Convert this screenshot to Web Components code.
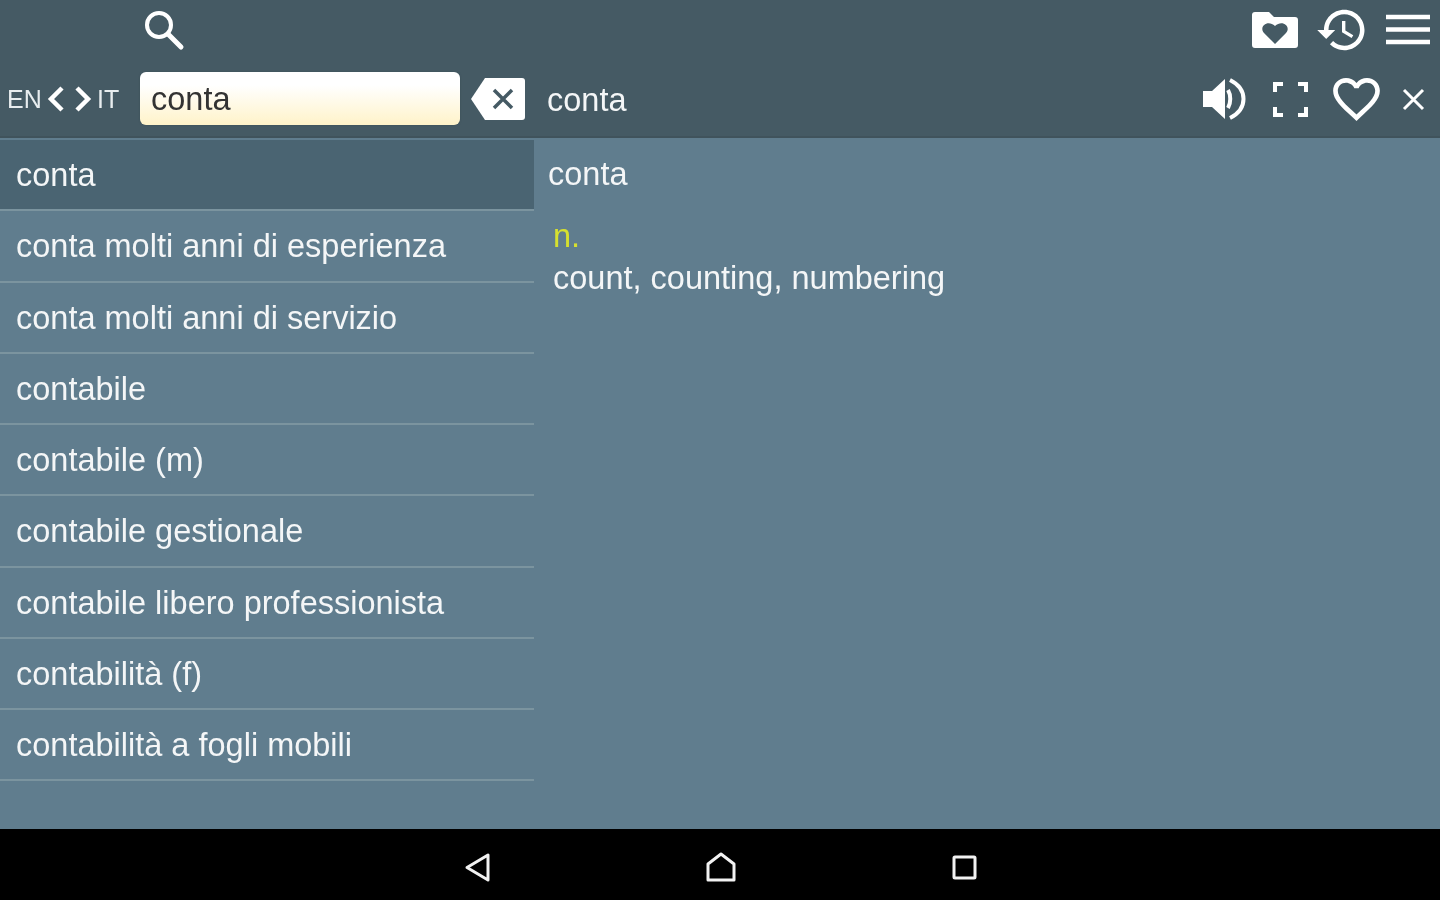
<!DOCTYPE html>
<html>
<head>
<meta charset="utf-8">
<title>EN-IT dictionary</title>
<style>
html, body { margin: 0; height: 100%; }
body { width: 1440px; height: 900px; overflow: hidden; background: #000; font-family: "Liberation Sans", Arial, sans-serif; }
</style>
</head>
<body>
<dict-app>
    <dict-toolbar slot="toolbar" query="conta" title-text="conta"></dict-toolbar>
    <word-list slot="list">
        <word-row selected>conta</word-row>
        <word-row>conta molti anni di esperienza</word-row>
        <word-row>conta molti anni di servizio</word-row>
        <word-row>contabile</word-row>
        <word-row>contabile (m)</word-row>
        <word-row>contabile gestionale</word-row>
        <word-row>contabile libero professionista</word-row>
        <word-row>contabilità (f)</word-row>
        <word-row>contabilità a fogli mobili</word-row>
    </word-list>
    <word-detail slot="detail" word="conta" kind="n.">count, counting, numbering</word-detail>
    <nav-bar slot="nav"></nav-bar>
</dict-app>

<script>
// Icon shapes, all on the same white fill or stroke
const ICONS = {
    search: '<circle cx="16" cy="16" r="12" fill="none" stroke="currentColor" stroke-width="4"/><path d="M25 25l13 13" fill="none" stroke="currentColor" stroke-width="5" stroke-linecap="round"/>',
    folder: '<path fill="currentColor" fill-rule="evenodd" d="M3 0h14l5 5h21a3 3 0 0 1 3 3v25a3 3 0 0 1-3 3H3a3 3 0 0 1-3-3V3a3 3 0 0 1 3-3zM23 32L12 21c-5.500-6 3.500-14 11-7 7.500-7 16.500 1 11 7z"/>',
    history: '<path fill="currentColor" d="M13 3c-4.970 0-9 4.030-9 9H1l3.890 3.890.07.14L9 12H6c0-3.870 3.130-7 7-7s7 3.130 7 7-3.130 7-7 7c-1.930 0-3.680-.79-4.940-2.060l-1.420 1.420C8.270 19.990 10.510 21 13 21c4.970 0 9-4.030 9-9s-4.030-9-9-9zm-1 5v5l4.280 2.540.72-1.210-3.500-2.080V8H12z"/>',
    menu: '<path d="M0 5h44M0 17.500h44M0 30h44" stroke="currentColor" stroke-width="4.500" fill="none"/>',
    prev: '<path d="M14 2L3 13l11 11" fill="none" stroke="currentColor" stroke-width="4.500"/>',
    next: '<path d="M2 2l11 11L2 24" fill="none" stroke="currentColor" stroke-width="4.500"/>',
    clear: '<path fill="currentColor" fill-rule="evenodd" d="M14 0h37a3 3 0 0 1 3 3v36a3 3 0 0 1-3 3H14L0 21z"/><path d="M23 12l18 18M41 12L23 30" stroke="#455a64" stroke-width="3.500" fill="none"/>',
    speaker: '<path fill="currentColor" d="M0 13h9L22 1v40L9 29H0z"/><path d="M25 12c3 5 3 13 0 18" fill="none" stroke="currentColor" stroke-width="4"/><path d="M27 2c18 9 18 29 0 38" fill="none" stroke="currentColor" stroke-width="4"/>',
    full: '<path d="M2 10V2h8M25 2h8v8M33 25v8h-8M10 33H2v-8" fill="none" stroke="currentColor" stroke-width="4"/>',
    heart: '<path fill="currentColor" d="M16.500 3c-1.740 0-3.410.81-4.500 2.090C10.910 3.810 9.240 3 7.500 3 4.420 3 2 5.420 2 8.500c0 3.780 3.400 6.860 8.550 11.540L12 21.350l1.450-1.320C18.600 15.360 22 12.280 22 8.500 22 5.420 19.580 3 16.500 3zm-4.400 15.550l-.1.1-.1-.1C7.140 14.240 4 11.390 4 8.500 4 6.500 5.500 5 7.500 5c1.540 0 3.040.99 3.570 2.360h1.870C13.460 5.990 14.960 5 16.500 5c2 0 3.500 1.500 3.500 3.500 0 2.890-3.140 5.740-7.900 10.050z"/>',
    close: '<path d="M2 2l19 19M21 2L2 21" stroke="currentColor" stroke-width="3" fill="none"/>',
    back: '<path d="M23 2v25L2 14.500z" fill="none" stroke="currentColor" stroke-width="3" stroke-linejoin="round"/>',
    home: '<path d="M2 28V12L15 2l13 10v16z" fill="none" stroke="currentColor" stroke-width="3" stroke-linejoin="round"/>',
    square: '<rect x="2" y="2" width="21" height="21" rx="1" fill="none" stroke="currentColor" stroke-width="3"/>'
}

class UiIcon extends HTMLElement {
    constructor(){
        super()
        this.attachShadow({mode: 'open'})
    }

    connectedCallback(){
        const view = this.getAttribute('view') || '0 0 24 24'
        const [, , w, h] = view.split(' ')
        const width = this.getAttribute('w') || w
        const height = this.getAttribute('h') || h
        this.shadowRoot.innerHTML = `
        <style>
        :host{ display:block; line-height:0; color:inherit; flex:none; }
        svg{ display:block; overflow:visible; }
        </style>
        <svg width="${width}" height="${height}" viewBox="${view}">${ICONS[this.getAttribute('name')]}</svg>`
    }
}

class DictApp extends HTMLElement {
    constructor(){
        super()
        this.attachShadow({mode: 'open'})
        this.shadowRoot.innerHTML = `
        <style>
        :host{
            display:grid;
            grid-template-columns:534px 1fr;
            grid-template-rows:138px 691px 71px;
            width:1440px;
            height:900px;
            background:#607d8e;
            color:#f4f6f7;
            font:32.5px "Liberation Sans", Arial, sans-serif;
            filter:blur(.7px);
        }
        .wide{ grid-column:1 / 3; }
        </style>
        <div class="wide"><slot name="toolbar"></slot></div>
        <slot name="list"></slot>
        <slot name="detail"></slot>
        <div class="wide"><slot name="nav"></slot></div>`
    }
}

class DictToolbar extends HTMLElement {
    constructor(){
        super()
        this.attachShadow({mode: 'open'})
        this.shadowRoot.innerHTML = `
        <style>
        :host{ display:block; height:138px; background:#455a64; color:#fff; box-shadow:inset 0 -2px 0 #40535c; }
        .top{ display:flex; align-items:center; height:58px; padding:0 10px 2px 143px; }
        .top .end{ margin-left:auto; display:flex; align-items:center; }
        .bottom{ display:flex; align-items:center; height:78px; }
        .lang{ font-size:25px; width:34px; color:#e8edef; }
        .lang.first{ margin-left:7px; }
        .lang.second{ width:22px; }
        input{
            box-sizing:border-box;
            width:320px;
            height:53px;
            margin:-1px 0 0 21px;
            padding:2px 10px 0 11px;
            border:0;
            border-radius:6px;
            background:linear-gradient(#fff 25%, #fff3c9);
            color:#333;
            font:32.5px "Liberation Sans", Arial, sans-serif;
            outline:none;
            box-shadow:0 0 2px #3a4c55;
        }
        .title{ margin:2px 0 0 22px; font-size:32.5px; color:#f4f6f7; }
        .end2{ margin-left:auto; display:flex; align-items:center; padding-right:15px; }
        </style>
        <div class="top">
            <ui-icon name="search" view="0 0 40 40"></ui-icon>
            <div class="end">
                <ui-icon name="folder" view="0 0 46 36" style="margin:2px 17px 0 0"></ui-icon>
                <ui-icon name="history" view="0 0 24 24" w="54" h="54" style="margin:2px 17px 0 0"></ui-icon>
                <ui-icon name="menu" view="0 0 44 34"></ui-icon>
            </div>
        </div>
        <div class="bottom">
            <span class="lang first">EN</span>
            <ui-icon name="prev" view="0 0 16 26" style="margin-left:7px"></ui-icon>
            <ui-icon name="next" view="0 0 16 26" style="margin:0 6px 0 11px"></ui-icon>
            <span class="lang second">IT</span>
            <input type="text">
            <ui-icon name="clear" view="0 0 54 42" style="margin-left:11px;margin-top:-1px"></ui-icon>
            <span class="title"></span>
            <div class="end2">
                <ui-icon name="speaker" view="0 0 44 42" style="margin-right:26px"></ui-icon>
                <ui-icon name="full" view="0 0 35 35" style="margin-right:25px"></ui-icon>
                <ui-icon name="heart" view="2 3 20 18.400" w="47" h="43" style="margin-right:22px"></ui-icon>
                <ui-icon name="close" view="0 0 23 23"></ui-icon>
            </div>
        </div>`
    }

    connectedCallback(){
        this.shadowRoot.querySelector('input').value = this.getAttribute('query')
        this.shadowRoot.querySelector('.title').textContent = this.getAttribute('title-text')
    }
}

class WordList extends HTMLElement {
    constructor(){
        super()
        this.attachShadow({mode: 'open'})
        this.shadowRoot.innerHTML = `
        <style>
        :host{ display:block; padding-top:2px; }
        </style>
        <slot></slot>`
    }
}

class WordRow extends HTMLElement {
    constructor(){
        super()
        this.attachShadow({mode: 'open'})
        this.shadowRoot.innerHTML = `
        <style>
        :host{
            display:flex;
            align-items:center;
            box-sizing:border-box;
            height:71.25px;
            padding:2px 16px 0;
            border-bottom:2px solid #7b949f;
            white-space:nowrap;
        }
        :host([selected]){ background:#4a6472; }
        </style>
        <slot></slot>`
    }
}

class WordDetail extends HTMLElement {
    constructor(){
        super()
        this.attachShadow({mode: 'open'})
        this.shadowRoot.innerHTML = `
        <style>
        :host{ display:block; padding:1px 0 0 14px; }
        .word{ height:71px; display:flex; align-items:center; }
        .body{ padding:5px 0 0 5px; line-height:42px; }
        .kind{ color:#d6e02f; }
        </style>
        <div class="word"></div>
        <div class="body">
            <div class="kind"></div>
            <div><slot></slot></div>
        </div>`
    }

    connectedCallback(){
        this.shadowRoot.querySelector('.word').textContent = this.getAttribute('word')
        this.shadowRoot.querySelector('.kind').textContent = this.getAttribute('kind')
    }
}

class NavBar extends HTMLElement {
    constructor(){
        super()
        this.attachShadow({mode: 'open'})
        this.shadowRoot.innerHTML = `
        <style>
        :host{ display:flex; align-items:center; justify-content:center; gap:216px; height:71px; padding:5px 0 0 2px; box-sizing:border-box; background:#000; color:#f2f2f2; }
        </style>
        <ui-icon name="back" view="0 0 25 29"></ui-icon>
        <ui-icon name="home" view="0 0 30 30"></ui-icon>
        <ui-icon name="square" view="0 0 25 25"></ui-icon>`
    }
}

customElements.define('ui-icon', UiIcon)
customElements.define('dict-app', DictApp)
customElements.define('dict-toolbar', DictToolbar)
customElements.define('word-list', WordList)
customElements.define('word-row', WordRow)
customElements.define('word-detail', WordDetail)
customElements.define('nav-bar', NavBar)
</script>
</body>
</html>
